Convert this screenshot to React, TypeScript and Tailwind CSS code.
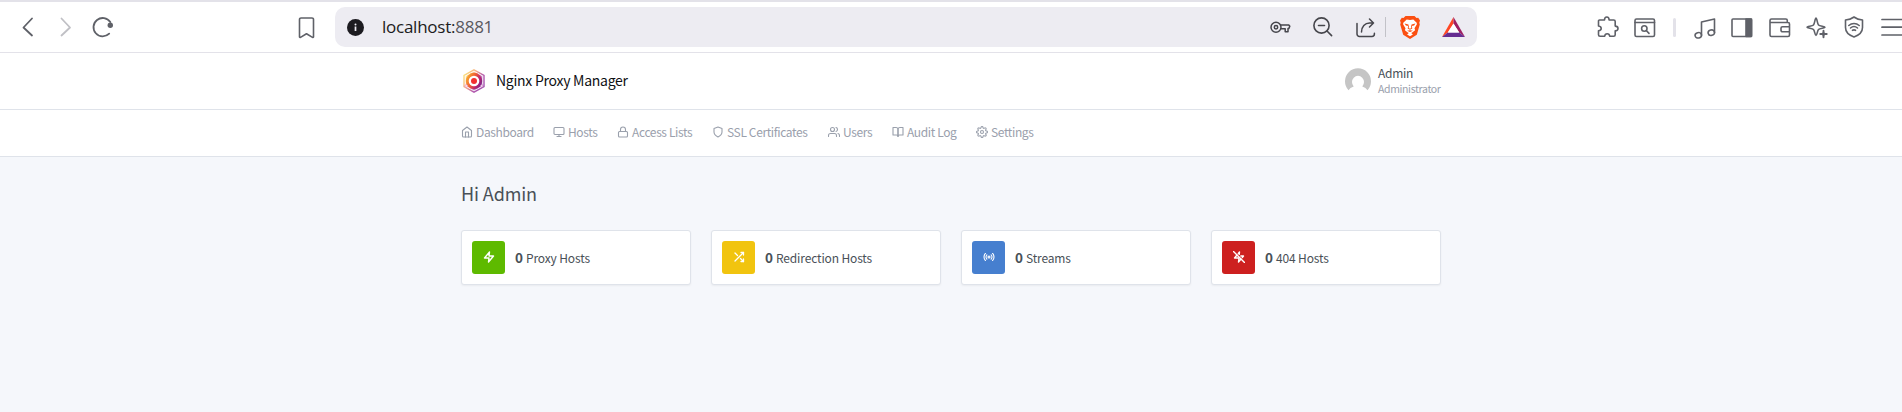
import type { ReactNode } from 'react';
import { FiHome, FiMonitor, FiLock, FiShield, FiUsers, FiSettings, FiZap, FiShuffle, FiRadio, FiZapOff, FiBookOpen } from 'react-icons/fi';
import type { IconType } from 'react-icons';

function Glyph({ w, h, className = '', sw = 1.5, children }: { w: number; h: number; className?: string; sw?: number; children: ReactNode }) {
  return (
    <svg width={w} height={h} viewBox={`0 0 ${w} ${h}`} fill="none" stroke="currentColor" strokeWidth={sw} strokeLinecap="round" strokeLinejoin="round" className={`shrink-0 ${className}`}>
      {children}
    </svg>
  );
}

function Toolbar() {
  return (
    <div className="flex h-[53px] items-start overflow-hidden border-t-2 border-b border-[#e3e2e9] bg-white text-[#5f6168]">
      <Glyph w={12} h={20} className="mt-[15px] ml-[22px]" sw={1.8}><path d="M10 1.5 1.5 10.5 10 18.5" /></Glyph>
      <Glyph w={12} h={20} className="mt-[15px] ml-[26px] text-[#c0c0c5]" sw={1.8}><path d="M1.5 1.5 10 10.5 1.5 18.5" /></Glyph>
      <Glyph w={22} h={22} className="mt-[14px] ml-[20px]" sw={1.8}>
        <path d="M18.3 6A9.2 9.2 0 1 0 17.2 17.7" />
        <circle cx="18.3" cy="9.2" r="2.7" fill="currentColor" stroke="none" />
      </Glyph>
      <Glyph w={17} h={22} className="mt-[15px] ml-[184px]" sw={1.6}>
        <path d="M3 1h11a1.5 1.5 0 0 1 1.5 1.5v17.4a.7.7 0 0 1-1 .5L8.5 16.8 2.5 20.4a.7.7 0 0 1-1-.5V2.5A1.5 1.5 0 0 1 3 1Z" />
      </Glyph>
      <div className="mt-[5px] ml-[20px] flex h-[40px] w-[1142px] shrink-0 items-start rounded-[10px] bg-[#edecf2] text-[#46464c]">
        <Glyph w={17} h={17} className="mt-[12px] ml-[12px]">
          <circle cx="8.5" cy="8.5" r="8.5" fill="#1c1b20" stroke="none" />
          <path d="M8.5 7.5v4.5" stroke="#edecf2" strokeWidth="1.7" strokeLinecap="butt" />
          <circle cx="8.5" cy="5.4" r="1" fill="#edecf2" stroke="none" />
        </Glyph>
        <div className="mt-[6px] ml-[18px] w-[888px] font-['Open_Sans',sans-serif] text-[17px] leading-[28px] tracking-[-0.25px] text-[#1c1b20]">
          localhost:<span className="text-[#5a595f]">8881</span>
        </div>
        <Glyph w={21} h={14} className="mt-[13px]" sw={1.5}>
          <circle cx="6" cy="7.3" r="5" />
          <circle cx="6" cy="7.3" r="1.7" />
          <path d="M10.5 5h8.3l1 1.2-1 2.4h-.8v3.2h-2.8V8.8h-4" />
        </Glyph>
        <Glyph w={20} h={20} className="mt-[10px] ml-[22px]" sw={1.6}>
          <circle cx="8.5" cy="8.5" r="7.6" /><path d="m14 14 4.6 4.6M5.5 8.5h6" />
        </Glyph>
        <Glyph w={20} h={20} className="mt-[11px] ml-[23px]" sw={1.5}>
          <path d="M1 5.5V16a2.4 2.4 0 0 0 2.4 2.4H16a2.4 2.4 0 0 0 2.4-2.4v-.8M5.5 14C5.5 8.5 9 5 13.5 5H17.5M13.5 1l4 4-4 4" />
        </Glyph>
        <div className="mt-[10px] ml-[9px] h-[20px] w-px shrink-0 bg-[#c2c2c8]" />
        <svg width="20" height="23" viewBox="0 0 20 23" className="mt-[9px] ml-[14px] shrink-0">
          <path d="M5.5 0h9l2 2 1.7-.2L20 4.6l-.7 2.2.5 1.8-3 10.2L10 23l-6.8-4.2L.2 8.6l.5-1.8L0 4.6l1.8-2.8 1.7.2Z" fill="#fb4f11" />
          <path d="m10 4 3.3-.6 3.4 3.3.2 1.5-2.4 4 .6 2-2.9 2.2-1 .7 1.7 1.3L10 20.2l-2.9-1.8 1.7-1.3-1-.7L4.9 14.2l.6-2-2.4-4 .2-1.5 3.4-3.3Z" fill="#fff" />
          <path d="m4.6 7.5 3.9 1.1-.2 1.4-2.4-.6ZM15.4 7.5l-3.9 1.1.2 1.4 2.4-.6ZM8.3 9.2l-.6 3.3 2.3 1.3 2.3-1.3-.6-3.3-.7.3.3 2.6-1.3.6-1.3-.6.3-2.6ZM7 14.7l3 1.4 3-1.4-3-.4Z" fill="#fb4f11" />
        </svg>
        <svg width="23" height="20" viewBox="0 0 23 20" className="mt-[10px] ml-[22px] shrink-0">
          <path d="M11.5 0v6.5L5.8 15.5 0 20Z" fill="#ff4724" />
          <path d="M11.5 0 23 20l-5.8-4.5-5.7-9Z" fill="#9e1f63" />
          <path d="M0 20h23l-5.8-4.5H5.8Z" fill="#662d91" />
          <path d="m11.5 6.5 5.7 9H5.8Z" fill="#fff" />
        </svg>
      </div>
      <Glyph w={22} h={22} className="mt-[14px] ml-[120px]" sw={1.6}>
        <path d="M2.5 4h5c0-2 .8-3 2.3-3s2.3 1 2.3 3h4.6a1.5 1.5 0 0 1 1.5 1.5v4.6c1.8 0 2.8.9 2.8 2.3s-1 2.3-2.8 2.3v4a1.5 1.5 0 0 1-1.5 1.5h-4c-.2-1.7-1.1-2.5-2.5-2.5s-2.3.8-2.5 2.5H3A1.5 1.5 0 0 1 1.5 18.7v-4c1.7-.2 2.7-1 2.7-2.3S3.2 10.3 1.5 10V5A1 1 0 0 1 2.5 4Z" />
      </Glyph>
      <Glyph w={22} h={20} className="mt-[16px] ml-[15px]" sw={1.6}>
        <rect x="1" y="1" width="19.5" height="17.5" rx="1.5" /><path d="M1 4.5h19.5" /><circle cx="10.3" cy="10.5" r="2.7" /><path d="m12.5 12.7 2.5 2.7" />
      </Glyph>
      <div className="mt-[16px] ml-[17px] h-[19px] w-[3px] shrink-0 rounded bg-[#e3e2e9]" />
      <Glyph w={22} h={22} className="mt-[16px] ml-[18px]" sw={1.6}>
        <path d="M7.5 17.3V4l13-3v13.5" /><ellipse cx="4.3" cy="17.3" rx="3.2" ry="2.7" transform="rotate(-15 4.3 17.3)" /><ellipse cx="17.3" cy="14.7" rx="3.2" ry="2.7" transform="rotate(-15 17.3 14.7)" />
      </Glyph>
      <Glyph w={22} h={20} className="mt-[16px] ml-[15px]" sw={1.6}>
        <rect x="1" y="1" width="19.5" height="17.5" rx="1" /><path d="M15 1h5.5v17.5H15Z" fill="currentColor" />
      </Glyph>
      <Glyph w={22} h={20} className="mt-[16px] ml-[16px]" sw={1.6}>
        <path d="M18.3 4.500V2.5A1.5 1.5 0 0 0 16.8 1H2.5A1.5 1.5 0 0 0 1 2.5V17a1.5 1.5 0 0 0 1.5 1.5H19a1.5 1.5 0 0 0 1.5-1.5V6A1.5 1.5 0 0 0 19 4.5H1M20.5 8.8h-7a1.5 1.5 0 0 0-1.5 1.5v2a1.5 1.5 0 0 0 1.5 1.5h7" />
      </Glyph>
      <Glyph w={22} h={22} className="mt-[15px] ml-[15px]" sw={1.6}>
        <path d="M10 1c1 0 1.3 5.8 2.5 7s6.5 1.2 6.5 2.2-5.3 1-6.5 2.3S11 18.5 10 18.5s-1.3-4.8-2.5-6S1 11.2 1 10.2 6.3 9.2 7.5 8 9 1 10 1Z" />
        <path d="m17.5 13 1.1 2.9 2.9 1.1-2.9 1.1-1.1 2.9-1.1-2.9-2.9-1.1 2.9-1.1Z" fill="currentColor" stroke="#fff" strokeWidth="1.5" paintOrder="stroke" />
        <path d="M17.5 13.8v6.4M14.3 17h6.4" strokeWidth="1.9" />
      </Glyph>
      <Glyph w={20} h={23} className="mt-[14px] ml-[16px]" sw={1.6}>
        <path d="M10 1c2.5 1.9 5.2 2.7 8.5 3v7.5c0 4.8-3.5 7.7-8.5 9.5-5-1.8-8.5-4.7-8.5-9.5V4C4.8 3.7 7.5 2.9 10 1Z" />
        <path d="M4.8 9.5c3-2.6 7.4-2.6 10.4 0M6.5 12c2-1.7 5-1.7 7 0M8.5 14.3c1-.6 2-.6 3 0" />
      </Glyph>
      <Glyph w={22} h={18} className="mt-[16px] ml-[17px]" sw={1.7}><path d="M1 1.5h22M1 9.2h22M1 17h22" /></Glyph>
    </div>
  );
}

function Logo() {
  return (
    <svg width="22" height="24" viewBox="0 0 22 24" className="mt-[16px] ml-[2px] shrink-0">
      <defs>
        <linearGradient id="edge" x1="0" y1="0.1" x2="1" y2="0.8"><stop offset="0" stopColor="#fbe97a" /><stop offset=".4" stopColor="#f4a98a" /><stop offset=".7" stopColor="#b45cae" /><stop offset="1" stopColor="#a050b0" /></linearGradient>
        <linearGradient id="ring" x1="0" y1="0.2" x2="1" y2="0.7"><stop offset="0" stopColor="#fbb62d" /><stop offset=".45" stopColor="#ee5a35" /><stop offset=".7" stopColor="#c3286b" /><stop offset="1" stopColor="#75208b" /></linearGradient>
      </defs>
      <path d="M11 .8 21 6.4v11.2L11 23.2 1 17.6V6.4Z" fill="#fff" stroke="url(#edge)" strokeWidth="1.4" />
      <path d="M11 2.5 19.3 7.2v9.6L11 21.5l-8.3-4.7V7.2Z" fill="url(#edge)" opacity=".75" />
      <circle cx="11" cy="12" r="8.2" fill="url(#ring)" />
      <circle cx="11" cy="12" r="5.3" fill="#fff" />
      <circle cx="11" cy="12" r="3" fill="#f23030" />
      <circle cx="3.2" cy="17" r="1.3" fill="#fff" stroke="#e887ad" strokeWidth=".7" />
      <circle cx="18.8" cy="17" r="1.3" fill="#fff" stroke="#b65bb0" strokeWidth=".7" />
    </svg>
  );
}

const nav: { label: string; icon: IconType; width: string }[] = [
  { label: 'Dashboard', icon: FiHome, width: 'w-[92px]' },
  { label: 'Hosts', icon: FiMonitor, width: 'w-[64px]' },
  { label: 'Access Lists', icon: FiLock, width: 'w-[95px]' },
  { label: 'SSL Certificates', icon: FiShield, width: 'w-[116px]' },
  { label: 'Users', icon: FiUsers, width: 'w-[64px]' },
  { label: 'Audit Log', icon: FiBookOpen, width: 'w-[84px]' },
  { label: 'Settings', icon: FiSettings, width: 'w-[60px]' },
];

const cards: { label: string; icon: IconType; color: string; stroke: number }[] = [
  { label: 'Proxy Hosts', icon: FiZap, color: 'bg-[#5eba00]', stroke: 2.8 },
  { label: 'Redirection Hosts', icon: FiShuffle, color: 'bg-[#f1c40f]', stroke: 2.6 },
  { label: 'Streams', icon: FiRadio, color: 'bg-[#467fcf]', stroke: 2.2 },
  { label: '404 Hosts', icon: FiZapOff, color: 'bg-[#cd201f]', stroke: 2.8 },
];

export default function App() {
  return (
    <div className="h-[412px] w-[1902px] overflow-hidden bg-[#f5f7fb] font-['Noto_Sans_CJK_SC',sans-serif] text-[#495057]">
      <Toolbar />
      <header className="h-[57px] border-b border-[#dfe3ea] bg-white">
        <div className="ml-[461px] flex w-[980px] items-start">
          <Logo />
          <div className="mt-[16px] ml-[11px] text-[14px] leading-[22px] tracking-[-0.27px] whitespace-nowrap text-[#0f1114]">Nginx Proxy Manager</div>
          <svg width="26" height="26" viewBox="0 0 26 26" className="mt-[15px] ml-auto shrink-0">
            <path d="M3.5 22.2A13 13 0 1 1 22.5 22.2Q21 19.8 17.3 18.5A6 6.3 0 1 0 8.7 18.5Q5 19.8 3.5 22.2Z" fill="#c5c5c5" />
          </svg>
          <div className="mt-[12px] ml-[7px] w-[63px] whitespace-nowrap">
            <div className="text-[12px] leading-[16px] tracking-[-0.3px]">Admin</div>
            <div className="text-[10.5px] leading-[15px] tracking-[-0.36px] text-[#9aa0ac]">Administrator</div>
          </div>
        </div>
      </header>
      <nav className="h-[47px] border-b border-[#dfe3ea] bg-white">
        <div className="ml-[461px] flex pt-[12px] text-[#9aa0ac]">
          {nav.map(({ label, icon: Icon, width }) => (
            <div key={label} className={`flex shrink-0 items-start whitespace-nowrap ${width}`}>
              <Icon size={12} strokeWidth={2.2} className="mt-[4px] shrink-0" />
              <span className="ml-[3px] text-[12px] leading-[20px] tracking-[-0.37px]">{label}</span>
            </div>
          ))}
        </div>
      </nav>
      <main className="ml-[461px] w-[980px] pt-[22px]">
        <h1 className="text-[18px] leading-[28px] tracking-[-0.1px]">Hi Admin</h1>
        <div className="mt-[23px] grid grid-cols-4 gap-[20px]">
          {cards.map(({ label, icon: Icon, color, stroke }) => (
            <div key={label} className="flex h-[55px] items-center rounded-[3px] border border-[#dfe3ea] bg-white pl-[10px] shadow-[0_1px_2px_0_rgba(0,0,0,0.05)]">
              <div className={`flex size-[33px] shrink-0 justify-center rounded-[3px] pt-[10px] text-white ${color}`}>
                <Icon size={12} strokeWidth={stroke} />
              </div>
              <div className="ml-[10px] flex items-baseline whitespace-nowrap">
                <span className="text-[13.5px] leading-[20px] font-bold">0</span>
                <span className="ml-[3px] text-[12px] leading-[20px] tracking-[-0.14px]">{label}</span>
              </div>
            </div>
          ))}
        </div>
      </main>
    </div>
  );
}
